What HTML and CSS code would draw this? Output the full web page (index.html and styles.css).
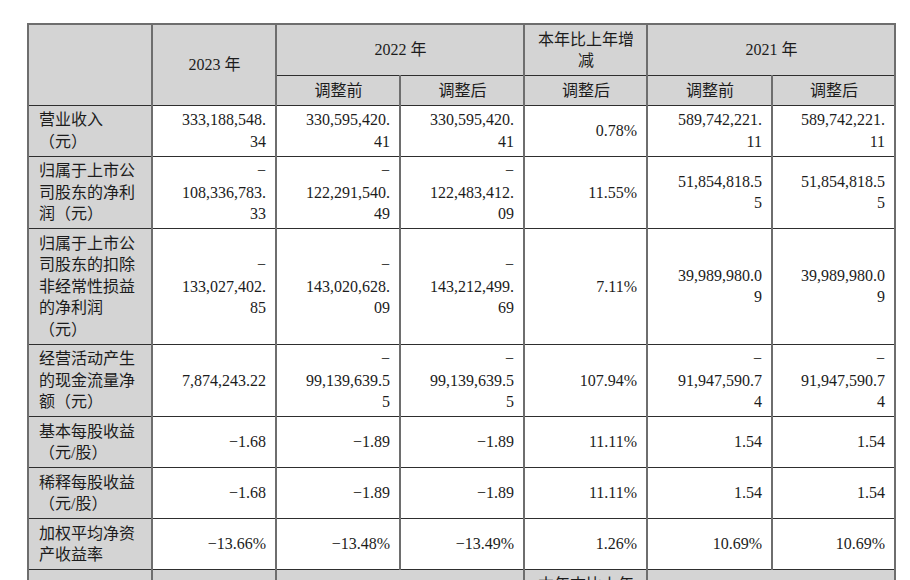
FILE: index.html
```html
<!DOCTYPE html>
<html lang="zh-CN">
<head>
<meta charset="utf-8">
<title>主要会计数据</title>
<link rel="stylesheet" href="styles.css">
</head>
<body>
<div class="page">
<table class="fin">
  <colgroup>
    <col class="c1"><col class="c2"><col class="c3"><col class="c4"><col class="c5"><col class="c6"><col class="c7">
  </colgroup>
  <tr class="hd">
    <th rowspan="2" class="label"></th>
    <th rowspan="2">2023 年</th>
    <th colspan="2">2022 年</th>
    <th>本年比上年增<br>减</th>
    <th colspan="2">2021 年</th>
  </tr>
  <tr class="hd">
    <th>调整前</th>
    <th>调整后</th>
    <th>调整后</th>
    <th>调整前</th>
    <th>调整后</th>
  </tr>
  <tr>
    <td class="label">营业收入<br>（元）</td>
    <td>333,188,548.<br>34</td>
    <td>330,595,420.<br>41</td>
    <td>330,595,420.<br>41</td>
    <td>0.78%</td>
    <td>589,742,221.<br>11</td>
    <td>589,742,221.<br>11</td>
  </tr>
  <tr>
    <td class="label">归属于上市公<br>司股东的净利<br>润（元）</td>
    <td>−<br>108,336,783.<br>33</td>
    <td>−<br>122,291,540.<br>49</td>
    <td>−<br>122,483,412.<br>09</td>
    <td>11.55%</td>
    <td>51,854,818.5<br>5</td>
    <td>51,854,818.5<br>5</td>
  </tr>
  <tr>
    <td class="label">归属于上市公<br>司股东的扣除<br>非经常性损益<br>的净利润<br>（元）</td>
    <td>−<br>133,027,402.<br>85</td>
    <td>−<br>143,020,628.<br>09</td>
    <td>−<br>143,212,499.<br>69</td>
    <td>7.11%</td>
    <td>39,989,980.0<br>9</td>
    <td>39,989,980.0<br>9</td>
  </tr>
  <tr>
    <td class="label">经营活动产生<br>的现金流量净<br>额（元）</td>
    <td>7,874,243.22</td>
    <td>−<br>99,139,639.5<br>5</td>
    <td>−<br>99,139,639.5<br>5</td>
    <td>107.94%</td>
    <td>−<br>91,947,590.7<br>4</td>
    <td>−<br>91,947,590.7<br>4</td>
  </tr>
  <tr>
    <td class="label">基本每股收益<br>（元/股）</td>
    <td>−1.68</td>
    <td>−1.89</td>
    <td>−1.89</td>
    <td>11.11%</td>
    <td>1.54</td>
    <td>1.54</td>
  </tr>
  <tr>
    <td class="label">稀释每股收益<br>（元/股）</td>
    <td>−1.68</td>
    <td>−1.89</td>
    <td>−1.89</td>
    <td>11.11%</td>
    <td>1.54</td>
    <td>1.54</td>
  </tr>
  <tr>
    <td class="label">加权平均净资<br>产收益率</td>
    <td>−13.66%</td>
    <td>−13.48%</td>
    <td>−13.49%</td>
    <td>1.26%</td>
    <td>10.69%</td>
    <td>10.69%</td>
  </tr>
  <tr class="hd">
    <th class="label"></th>
    <th></th>
    <th colspan="2"></th>
    <th>本年末比上年<br>末增减</th>
    <th colspan="2"></th>
  </tr>
</table>
</div>
</body>
</html>
```

FILE: styles.css
```css
html, body {
  margin: 0;
  padding: 0;
  background: #ffffff;
}

.page {
  padding: 23px 0 0 27px;
}

.fin {
  border-collapse: collapse;
  table-layout: fixed;
  width: 869px;
  font-family: "Liberation Serif", "Noto Sans CJK SC", serif;
  font-size: 16px;
  line-height: 21.5px;
  color: #1c1c1c;
  border-top: 2px solid #6e6e6e;
  border-right: 2px solid #6e6e6e;
  border-left: 2px solid #6e6e6e;
}

.c1, .c2, .c3, .c4 { width: 124px; }
.c5 { width: 123px; }
.c6 { width: 125px; }
.c7 { width: 123px; }

.fin th,
.fin td {
  border-left: 2px solid #6e6e6e;
  border-right: 2px solid #6e6e6e;
  border-top: 1px solid #2e2e2e;
  border-bottom: 1px solid #2e2e2e;
  padding: 3.5px 9px 3.5px 10px;
  vertical-align: middle;
  white-space: nowrap;
  overflow: hidden;
}

.fin th {
  background: #d4d4d4;
  font-weight: normal;
  text-align: center;
}

.fin td {
  text-align: right;
  background: #ffffff;
}

.fin td.label,
.fin th.label {
  text-align: left;
  background: #d4d4d4;
}
```
